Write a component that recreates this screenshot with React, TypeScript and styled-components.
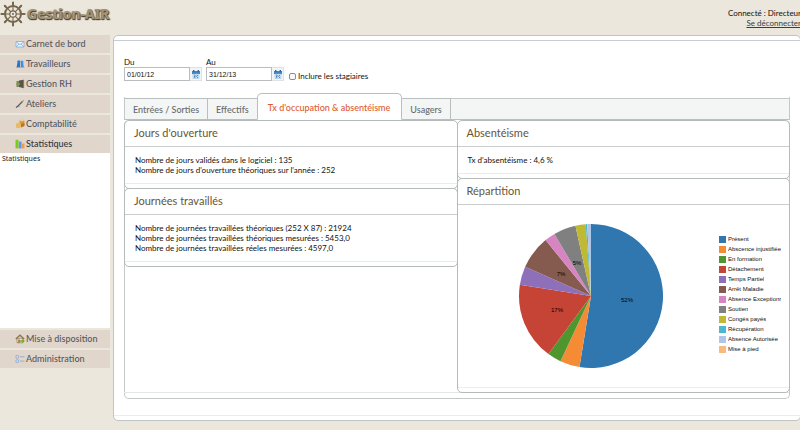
import React from "react";
import styled, { createGlobalStyle, css } from "styled-components";

const GlobalStyle = createGlobalStyle`
  * { box-sizing: border-box; }
  body {
    margin: 0;
    background: #ebe7dc;
    color: #111;
    font-family: Lato, "Noto Sans", sans-serif;
    font-size: 8px;
    line-height: 10px;
  }
  input, button { font: inherit; color: inherit; margin: 0; }
`;

const Page = styled.div`
  min-height: 100vh;
  overflow-x: clip;
  padding-bottom: 10px;
`;

const Header = styled.header`
  display: flex;
  justify-content: space-between;
  align-items: flex-start;
  height: 35px;
`;

const Brand = styled.div`
  display: flex;
  align-items: center;
  gap: 1px;
  height: 27px;
`;

const BrandName = styled.span`
  font-family: "Noto Sans", sans-serif;
  font-size: 14px;
  line-height: 20px;
  font-weight: 700;
  color: #a39378;
  text-shadow: 0 1px 1px #4b4030, 1px 1px 1px #5d503c, -1px 0 1px #cfc6b4;
`;

const Session = styled.div`
  display: flex;
  flex-direction: column;
  align-items: flex-end;
  margin-right: -1px;
  padding-top: 8px;
  white-space: nowrap;
`;

const LogoutLink = styled.a`
  color: #3d3d3d;
  text-decoration: underline;
`;

const Layout = styled.div`
  display: grid;
  grid-template-columns: 110px minmax(0, 1fr);
  gap: 3px;
  align-items: start;
`;

const Sidebar = styled.nav`
  display: flex;
  flex-direction: column;
  gap: 2px;
`;

const MenuButton = styled.button<{ $open?: boolean }>`
  display: flex;
  align-items: center;
  gap: 1px;
  height: 18px;
  padding: 0 0 0 15px;
  border: 0;
  background: #e0d6cb;
  color: ${(p) => (p.$open ? "#33383f" : "#55585f")};
  font-size: 9px;
  font-weight: 500;
  text-align: left;
  white-space: nowrap;
`;

const Submenu = styled.div`
  min-height: 175px;
  margin-top: -2px;
  padding: 0 2px;
  background: #fff;
`;

const SubmenuLink = styled.a`
  color: #222;
  font-family: "Noto Sans", sans-serif;
  font-size: 7px;
  text-decoration: none;
`;

const Main = styled.main`
  margin-right: -1px;
  padding: 4px 0;
  border: 1px solid #c0c4c4;
  border-radius: 5px;
  background: #fff;
`;

const MainBody = styled.div`
  padding: 16px 10px;
  border-top: 1px solid #c8cccc;
  border-bottom: 1px solid #ececec;
`;

const Filters = styled.form`
  display: flex;
  align-items: flex-end;
  gap: 4px;
`;

const Field = styled.div`
  display: flex;
  flex-direction: column;
`;

const DateBox = styled.div`
  display: flex;
`;

const DateInput = styled.input`
  width: 66px;
  height: 14px;
  padding: 0 2px;
  border: 1px solid #b9bdbf;
  border-radius: 0;
  background: #fff;
  font-family: "Liberation Sans", sans-serif;
  font-size: 7px;
`;

const CalendarButton = styled.button`
  display: flex;
  align-items: center;
  justify-content: center;
  width: 12px;
  height: 14px;
  padding: 0;
  border: 1px solid #dfe2e4;
  border-left: 0;
  background: #f3f4f5;
`;

const CheckLabel = styled.label`
  display: flex;
  align-items: center;
  gap: 2px;
  margin-left: 1px;
  white-space: nowrap;
`;

const Check = styled.input`
  appearance: none;
  width: 7px;
  height: 7px;
  border: 1px solid #8d8d8d;
  border-radius: 2px;
  background: #fafafa;
`;

const Tabs = styled.section`
  margin-top: 12px;
`;

const TabList = styled.div`
  display: flex;
  align-items: flex-end;
  height: 27px;
  background: linear-gradient(#fff 5px, #c3c8c8 5px, #c3c8c8 6px, #f3f6f5 6px);
  border: 1px solid #c3c8c8;
  border-width: 0 1px;
  border-image: linear-gradient(transparent 5px, #c3c8c8 5px) 1;
  box-shadow: inset 0 -1px #b9bebe;
`;

const Tab = styled.button<{ $active?: boolean }>`
  display: flex;
  align-items: center;
  height: 22px;
  padding: 2px 8px 0;
  border: 1px solid #b9bebe;
  border-left: 0;
  background: #f3f6f5;
  color: #646c70;
  font-size: 9px;
  font-weight: 500;
  white-space: nowrap;
  ${(p) =>
    p.$active &&
    css`
      height: 27px;
      padding: 2px 11px 0 10px;
      border-bottom-color: #fff;
      border-left: 1px solid #b9bebe;
      border-radius: 5px 5px 0 0;
      margin-left: -1px;
      background: #fff;
      color: #dd5a30;
    `}
`;

const TabContent = styled.div`
  padding-bottom: 5px;
  border: 1px solid #c3c7c8;
  border-top: 0;
  border-radius: 5px;
`;

const Columns = styled.div`
  display: grid;
  grid-template-columns: repeat(2, minmax(0, 1fr));
  align-items: start;
  margin-left: -1px;
  border-bottom: 1px solid #e4e6e6;
`;

const Column = styled.div`
  display: flex;
  flex-direction: column;
`;

const Panel = styled.article`
  margin-bottom: -1px;
  margin-right: -1px;
  padding-bottom: 4px;
  border: 1px solid #b5baba;
  border-radius: 5px;
`;

const PanelTitle = styled.h2`
  margin: 0;
  padding: 4px 9px 6px;
  border-bottom: 1px solid #c9cdcd;
  color: #66553a;
  font-size: 11px;
  line-height: 15px;
  font-weight: 400;
`;

const PanelBody = styled.div<{ $chart?: boolean }>`
  padding: 8px 10px;
  border-bottom: 1px solid #ececec;
  ${(p) =>
    p.$chart &&
    css`
      display: flex;
      align-items: center;
      justify-content: flex-end;
      gap: 55px;
      padding: 18px 8px;
    `}
`;

const Line = styled.p`
  margin: 0;
`;

const Legend = styled.ul`
  display: flex;
  flex-direction: column;
  width: 62px;
  margin: 0 0 4px;
  padding: 0;
  list-style: none;
  overflow: hidden;
  font-family: "Liberation Sans", sans-serif;
  font-size: 6px;
  white-space: nowrap;
`;

const LegendItem = styled.li`
  display: flex;
  align-items: center;
  gap: 2px;
`;

const Swatch = styled.span<{ $color: string }>`
  flex: none;
  width: 7px;
  height: 7px;
  background: ${(p) => p.$color};
`;

const LegendText = styled.span`
  overflow: hidden;
`;

type Slice = { label: string; color: string; end: number };

const slices: Slice[] = [
  { label: "Présent", color: "#3077b0", end: 189.2 },
  { label: "Abscence injustifiée", color: "#f58b34", end: 205.1 },
  { label: "En formation", color: "#50962e", end: 216.2 },
  { label: "Détachement", color: "#c64436", end: 278.9 },
  { label: "Temps Partiel", color: "#8e70ba", end: 293.9 },
  { label: "Arrêt Maladie", color: "#865b4f", end: 320.9 },
  { label: "Absence Exceptionr", color: "#d785c2", end: 329.5 },
  { label: "Soutien", color: "#808080", end: 347.5 },
  { label: "Congés payés", color: "#bfb934", end: 355.8 },
  { label: "Récupération", color: "#4db8cd", end: 357 },
  { label: "Absence Autorisée", color: "#b0c6e6", end: 360 },
  { label: "Mise à pied", color: "#f9bb7d", end: 360 },
];

const R = 72;
const C = 73;
const point = (deg: number) => {
  const a = (deg * Math.PI) / 180;
  return `${(C + R * Math.sin(a)).toFixed(2)} ${(C - R * Math.cos(a)).toFixed(2)}`;
};

const Pie = () => (
  <svg width="146" height="146" viewBox="0 0 146 146" role="img" aria-label="Répartition">
    {slices.map((s, i) => {
      const start = i ? slices[i - 1].end : 0;
      if (s.end === start) return null;
      return (
        <path
          key={s.label}
          fill={s.color}
          d={`M${C} ${C}L${point(start)}A${R} ${R} 0 ${s.end - start > 180 ? 1 : 0} 1 ${point(s.end)}Z`}
        />
      );
    })}
    <g fontFamily="Liberation Sans, sans-serif" fontSize="6" textAnchor="middle" fill="#000">
      <text x="109" y="79">52%</text>
      <text x="39" y="89">17%</text>
      <text x="43" y="53">7%</text>
      <text x="59" y="42">5%</text>
    </g>
  </svg>
);

const Wheel = () => (
  <svg width="26" height="26" viewBox="0 0 26 26" fill="none" stroke="#75664c" aria-hidden="true">
    <circle cx="13" cy="13" r="8" strokeWidth="2" />
    <circle cx="13" cy="13" r="3.2" strokeWidth="1.2" />
    {[0, 45, 90, 135, 180, 225, 270, 315].map((a) => (
      <g key={a} transform={`rotate(${a} 13 13)`}>
        <path d="M13 10V1" strokeWidth="1.1" />
        <path d="M13 3.4V1.4" strokeWidth="2" strokeLinecap="round" />
      </g>
    ))}
    <circle cx="13" cy="13" r="1" fill="#75664c" stroke="none" />
  </svg>
);

const CalendarIcon = () => (
  <svg width="8" height="9" viewBox="0 0 8 9" aria-hidden="true">
    <path fill="#3f86c6" d="M0 1h8v3H0z" />
    <path fill="#2b68a5" d="M1 0h1.4v2H1zM5.6 0H7v2H5.6z" />
    <path fill="#dcebf8" stroke="#8db4d8" strokeWidth=".5" d="M1 4h6v4.6H1z" />
    <path stroke="#2767a8" strokeWidth=".9" fill="none" d="M2.3 5l1 .6-1 .7 1 .8-1 .6M5.8 5L4.6 6.3l1.2 1.5" />
  </svg>
);

const iconShapes: Record<string, React.ReactNode> = {
  mail: (
    <>
      <path fill="#eaf3fc" stroke="#86aed8" strokeWidth=".8" d="M1 2.5h8v5.5H1z" />
      <path fill="none" stroke="#86aed8" strokeWidth=".8" d="M1 2.7l4 3 4-3M1 8l3-3M9 8L6 5" />
    </>
  ),
  people: (
    <>
      <circle cx="3.8" cy="2.8" r="1.6" fill="#2d7ccb" />
      <circle cx="7" cy="3" r="1.5" fill="#4a94dc" />
      <path fill="#2673c4" d="M2.4 4h2.8v4.5H1.6z" />
      <path fill="#3f8edb" d="M6 4h2.2l.6 4.5H6z" />
      <path fill="#83b6e6" d="M1 8h8.5v.9H1z" />
    </>
  ),
  door: (
    <>
      <path fill="#5a5347" d="M4 1.5L9 .8v8.4L4 8z" />
      <path fill="#8b7d63" d="M1.5 2H4v6H1.5z" />
      <path fill="#74a646" d="M1 4.2h2.3V3l2 2-2 2V5.8H1z" />
      <path fill="#c8b88a" d="M8.6 1h.8v8h-.8z" />
    </>
  ),
  tool: (
    <>
      <path fill="none" stroke="#55585a" strokeWidth="1.2" d="M1 8.4L3 7l4.5-4.5" />
      <path fill="none" stroke="#8f9394" strokeWidth="1" d="M6.5 2.7L9 1.6M3 7.5l1.6-.2" />
    </>
  ),
  boxes: (
    <>
      <path fill="#d6953c" d="M4.5 1.6L8 .8l1.4 1v5L6 8H4.5z" />
      <path fill="#e9b965" d="M1 4.4l3.5-.6L6 5v3.6l-4 .6-1-1z" />
      <path fill="#b97528" d="M6 5l3.4-1v3L6 8.6z" />
      <path fill="#f3d28f" d="M4.5 1.6L8 .8l1.4 1-3.4.8z" />
    </>
  ),
  bars: (
    <>
      <path fill="#82c91e" d="M.5.8h3v8.6h-3z" />
      <path fill="#5b9be6" d="M3.8 2.6h2.8v6.8H3.8z" />
      <path fill="#ef9d50" d="M6.9 4.6h2.6v4.8H6.9z" />
    </>
  ),
  house: (
    <>
      <path fill="#ece2c8" stroke="#97805e" strokeWidth=".7" d="M2 4.4h6v4.4H2z" />
      <path fill="none" stroke="#8e7455" strokeWidth="1.3" d="M.8 5L5 1.2 9.2 5" />
      <path fill="#a0703d" d="M3.2 5.4h1.6v3.4H3.2z" />
      <path fill="#6fae2c" d="M5 6.2h2.3V4.8L9.8 7 7.3 9.2V7.8H5z" />
    </>
  ),
  list: (
    <>
      <path fill="#e6eef8" stroke="#7f9cc4" strokeWidth=".7" d="M1 1.6h2.4V4H1zM1 5.9h2.4v2.4H1z" />
      <path stroke="#8eaad0" strokeWidth=".9" d="M4.8 2.8h4.7M4.8 7.1h4.7" />
    </>
  ),
};

const MenuItem = ({ icon, label, open }: { icon: string; label: string; open?: boolean }) => (
  <MenuButton type="button" $open={open} aria-expanded={!!open}>
    <svg width="10" height="10" viewBox="0 0 10 10" aria-hidden="true">{iconShapes[icon]}</svg>
    {label}
  </MenuButton>
);

const DateField = ({ id, label, value }: { id: string; label: string; value: string }) => (
  <Field>
    <label htmlFor={id}>{label}</label>
    <DateBox>
      <DateInput id={id} type="text" defaultValue={value} />
      <CalendarButton type="button" aria-label={`Calendrier ${label}`}>
        <CalendarIcon />
      </CalendarButton>
    </DateBox>
  </Field>
);

export default function App() {
  return (
    <Page>
      <GlobalStyle />
      <Header>
        <Brand>
          <Wheel />
          <BrandName>Gestion-AIR</BrandName>
        </Brand>
        <Session>
          <span>Connecté : Directeur</span>
          <LogoutLink href="#logout">Se déconnecter</LogoutLink>
        </Session>
      </Header>
      <Layout>
        <Sidebar>
          <MenuItem icon="mail" label="Carnet de bord" />
          <MenuItem icon="people" label="Travailleurs" />
          <MenuItem icon="door" label="Gestion RH" />
          <MenuItem icon="tool" label="Ateliers" />
          <MenuItem icon="boxes" label="Comptabilité" />
          <MenuItem icon="bars" label="Statistiques" open />
          <Submenu>
            <SubmenuLink href="#statistiques">Statistiques</SubmenuLink>
          </Submenu>
          <MenuItem icon="house" label="Mise à disposition" />
          <MenuItem icon="list" label="Administration" />
        </Sidebar>
        <Main>
          <MainBody>
            <Filters>
              <DateField id="from" label="Du" value="01/01/12" />
              <DateField id="to" label="Au" value="31/12/13" />
              <CheckLabel>
                <Check type="checkbox" />
                Inclure les stagiaires
              </CheckLabel>
            </Filters>
            <Tabs>
              <TabList role="tablist">
                <Tab role="tab" type="button">Entrées / Sorties</Tab>
                <Tab role="tab" type="button">Effectifs</Tab>
                <Tab role="tab" type="button" aria-selected $active>Tx d'occupation &amp; absentéisme</Tab>
                <Tab role="tab" type="button">Usagers</Tab>
              </TabList>
              <TabContent role="tabpanel">
                <Columns>
                  <Column>
                    <Panel>
                      <PanelTitle>Jours d'ouverture</PanelTitle>
                      <PanelBody>
                        <Line>Nombre de jours validés dans le logiciel : 135</Line>
                        <Line>Nombre de jours d'ouverture théoriques sur l'année : 252</Line>
                      </PanelBody>
                    </Panel>
                    <Panel>
                      <PanelTitle>Journées travaillés</PanelTitle>
                      <PanelBody>
                        <Line>Nombre de journées travaillées théoriques (252 X 87) : 21924</Line>
                        <Line>Nombre de journées travaillées théoriques mesurées : 5453,0</Line>
                        <Line>Nombre de journées travaillées réeles mesurées : 4597,0</Line>
                      </PanelBody>
                    </Panel>
                  </Column>
                  <Column>
                    <Panel>
                      <PanelTitle>Absentéisme</PanelTitle>
                      <PanelBody>
                        <Line>Tx d'absentéisme : 4,6 %</Line>
                      </PanelBody>
                    </Panel>
                    <Panel>
                      <PanelTitle>Répartition</PanelTitle>
                      <PanelBody $chart>
                        <Pie />
                        <Legend>
                          {slices.map((s) => (
                            <LegendItem key={s.label}>
                              <Swatch $color={s.color} />
                              <LegendText>{s.label}</LegendText>
                            </LegendItem>
                          ))}
                        </Legend>
                      </PanelBody>
                    </Panel>
                  </Column>
                </Columns>
              </TabContent>
            </Tabs>
          </MainBody>
        </Main>
      </Layout>
    </Page>
  );
}
